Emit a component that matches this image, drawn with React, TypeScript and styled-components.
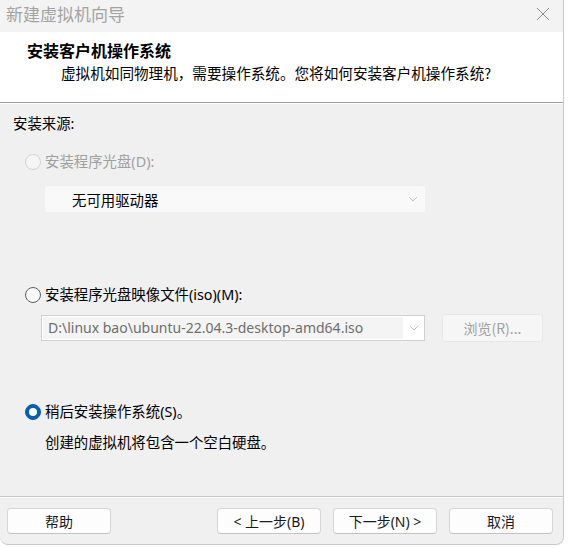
import React from "react";
import styled, { createGlobalStyle } from "styled-components";

const GlobalStyle = createGlobalStyle`
  html, body {
    margin: 0;
    padding: 0;
    background: #ffffff;
  }
  body {
    font-family: "Noto Sans", "Noto Sans CJK SC", sans-serif;
    font-size: 14.4px;
    color: #000000;
  }
`;

const Colors = {
  body: "#f0f0f0",
  titleBar: "#f3f3f3",
  border: "#c9c9c9",
  disabledText: "#a0a0a0",
  accent: "#005fb8",
};

const Chevron: React.FC<{ color?: string }> = ({ color = "#b8b8b8" }) => (
  <svg width="10" height="6" viewBox="0 0 10 6">
    <path d="M1 1 L5 5 L9 1" fill="none" stroke={color} strokeWidth="1" />
  </svg>
);

const CloseIcon = () => (
  <svg width="14" height="14" viewBox="0 0 14 14">
    <path d="M1 1 L13 13 M13 1 L1 13" stroke="#8c8c8c" strokeWidth="1" />
  </svg>
);

export default function App() {
  return (
    <>
      <GlobalStyle />
      <Window>
        <TitleBar>
          <TitleText>新建虚拟机向导</TitleText>
          <CloseButton>
            <CloseIcon />
          </CloseButton>
        </TitleBar>

        <Header>
          <HeaderTitle>安装客户机操作系统</HeaderTitle>
          <HeaderSubtitle>
            虚拟机如同物理机，需要操作系统。您将如何安装客户机操作系统?
          </HeaderSubtitle>
        </Header>
        <Separator />

        <Body>
          <SourceLabel>安装来源:</SourceLabel>

          <RadioRow $top={18}>
            <Radio $state="disabled" />
            <RadioLabel $disabled>安装程序光盘(D):</RadioLabel>
          </RadioRow>
          <DriveSelect>
            <span>无可用驱动器</span>
            <Chevron color="#c4c4c4" />
          </DriveSelect>

          <RadioRow $top={73}>
            <Radio $state="off" />
            <RadioLabel>安装程序光盘映像文件(iso)(M):</RadioLabel>
          </RadioRow>
          <IsoRow>
            <IsoCombo>
              <IsoPath>D:\linux bao\ubuntu-22.04.3-desktop-amd64.iso</IsoPath>
              <ComboArrow>
                <Chevron color="#c4c4c4" />
              </ComboArrow>
            </IsoCombo>
            <BrowseButton>浏览(R)...</BrowseButton>
          </IsoRow>

          <RadioRow $top={60}>
            <Radio $state="on" />
            <RadioLabel>稍后安装操作系统(S)。</RadioLabel>
          </RadioRow>
          <Note>创建的虚拟机将包含一个空白硬盘。</Note>
        </Body>

        <FooterSeparator />
        <Footer>
          <Button>帮助</Button>
          <NavGroup>
            <Button>&lt; 上一步(B)</Button>
            <Button>下一步(N) &gt;</Button>
            <Button>取消</Button>
          </NavGroup>
        </Footer>
      </Window>
    </>
  );
}

const Window = styled.div`
  width: 564px;
  height: 545px;
  display: flex;
  flex-direction: column;
  background: ${Colors.body};
  border-right: 1px solid ${Colors.border};
  border-bottom: 1px solid ${Colors.border};
  border-bottom-right-radius: 8px;
  border-bottom-left-radius: 8px;
  overflow: hidden;
  box-sizing: border-box;
`;

const TitleBar = styled.div`
  height: 32px;
  flex: none;
  display: flex;
  align-items: center;
  justify-content: space-between;
  background: ${Colors.titleBar};
  padding-left: 6px;
  padding-right: 13px;
`;

const TitleText = styled.div`
  font-family: "Noto Sans CJK SC", sans-serif;
  font-size: 17px;
  color: #a3a3a3;
  line-height: 24px;
  margin-top: -4px;
`;

const CloseButton = styled.div`
  display: flex;
  align-items: center;
  margin-top: -4px;
`;

const Header = styled.div`
  height: 70px;
  flex: none;
  background: #ffffff;
  padding-top: 8px;
  box-sizing: border-box;
`;

const HeaderTitle = styled.div`
  font-family: "Noto Sans CJK SC", sans-serif;
  font-weight: 700;
  font-size: 16px;
  line-height: 20px;
  padding-left: 27px;
`;

const HeaderSubtitle = styled.div`
  font-family: "Noto Sans CJK SC", sans-serif;
  font-size: 14.6px;
  line-height: 20px;
  padding-left: 61px;
  margin-top: 3px;
`;

const Separator = styled.div`
  height: 1px;
  flex: none;
  background: #a0a0a0;
  border-bottom: 1px solid #ffffff;
`;

const Body = styled.div`
  flex: 1;
  display: flex;
  flex-direction: column;
  padding-left: 13px;
`;

const SourceLabel = styled.div`
  margin-top: 10px;
  line-height: 20px;
`;

const RadioRow = styled.div<{ $top: number }>`
  display: flex;
  align-items: center;
  gap: 4px;
  margin-top: ${({ $top }) => $top}px;
  padding-left: 12px;
  height: 20px;
`;

const Radio = styled.span<{ $state: "on" | "off" | "disabled" }>`
  width: 16px;
  height: 16px;
  box-sizing: border-box;
  border-radius: 50%;
  flex: none;
  position: relative;
  background: ${({ $state }) =>
    $state === "on" ? Colors.accent : $state === "disabled" ? "#f5f5f5" : "#f8f8f8"};
  border: 1px solid
    ${({ $state }) =>
      $state === "on" ? Colors.accent : $state === "disabled" ? "#d4d4d4" : "#5f5f5f"};

  &::after {
    content: "";
    display: ${({ $state }) => ($state === "on" ? "block" : "none")};
    position: absolute;
    left: 3px;
    top: 3px;
    width: 8px;
    height: 8px;
    border-radius: 50%;
    background: #ffffff;
  }
`;

const RadioLabel = styled.span<{ $disabled?: boolean }>`
  color: ${({ $disabled }) => ($disabled ? Colors.disabledText : "#000000")};
  line-height: 20px;
  white-space: nowrap;
`;

const DriveSelect = styled.div`
  margin-top: 14px;
  margin-left: 32px;
  width: 380px;
  height: 26px;
  box-sizing: border-box;
  background: #f9f9f9;
  border-radius: 3px;
  display: flex;
  align-items: center;
  justify-content: space-between;
  padding-left: 27px;
  padding-right: 7px;
`;

const IsoRow = styled.div`
  margin-top: 9px;
  margin-left: 28px;
  display: flex;
  align-items: center;
  gap: 17px;
`;

const IsoCombo = styled.div`
  width: 384px;
  height: 26px;
  box-sizing: border-box;
  background: #ffffff;
  border: 1px solid #d0d0d0;
  display: flex;
  align-items: stretch;
`;

const IsoPath = styled.div`
  flex: 1;
  background: #f4f4f4;
  margin: 1px;
  padding-left: 5px;
  line-height: 22px;
  font-size: 14px;
  color: #6e6e6e;
  white-space: nowrap;
  overflow: hidden;
`;

const ComboArrow = styled.div`
  width: 20px;
  display: flex;
  align-items: center;
  justify-content: center;
`;

const BrowseButton = styled.div`
  width: 101px;
  height: 28px;
  box-sizing: border-box;
  border-radius: 3px;
  background: #f6f6f6;
  border: 1px solid #e8e8e8;
  color: ${Colors.disabledText};
  display: flex;
  align-items: center;
  justify-content: center;
  font-family: "Noto Sans CJK SC", sans-serif;
  font-size: 14px;
`;

const Note = styled.div`
  margin-top: 11px;
  padding-left: 32px;
  line-height: 20px;
`;

const FooterSeparator = styled.div`
  height: 1px;
  flex: none;
  background: #c8c8c8;
  border-bottom: 1px solid #ffffff;
`;

const Footer = styled.div`
  height: 46px;
  flex: none;
  display: flex;
  align-items: flex-start;
  justify-content: space-between;
  padding: 10px 10px 0 7px;
  box-sizing: border-box;
`;

const NavGroup = styled.div`
  display: flex;
  gap: 12px;
`;

const Button = styled.div`
  width: 104px;
  height: 26px;
  box-sizing: border-box;
  background: #fdfdfd;
  border: 1px solid #d6d6d6;
  border-bottom-color: #c2c2c2;
  border-radius: 4px;
  display: flex;
  align-items: center;
  justify-content: center;
  font-size: 14px;
  color: #1a1a1a;
  white-space: pre;
`;
